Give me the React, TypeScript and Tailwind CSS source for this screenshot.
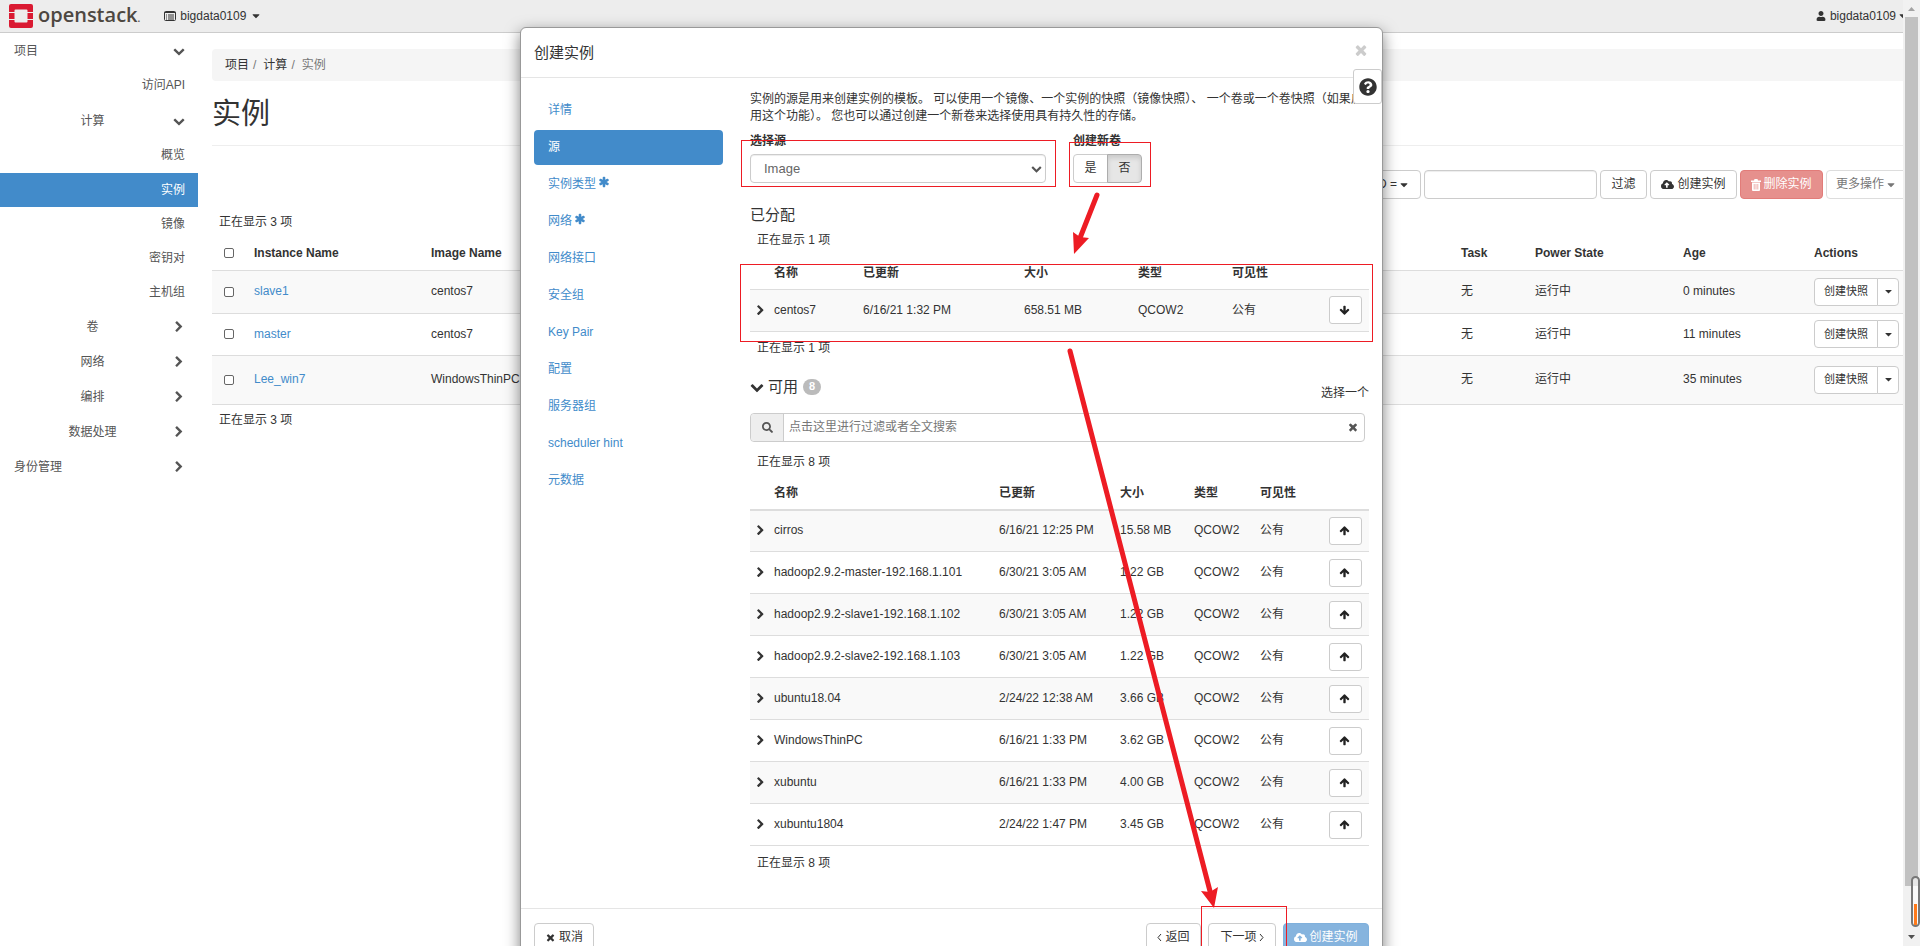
import { useState } from 'react'
import type { ReactNode } from 'react'
import { FaCloudUploadAlt, FaQuestionCircle, FaSearch, FaUser } from 'react-icons/fa'

type NavItem = { label: string; kind: 'root' | 'group' | 'leaf'; open?: boolean; active?: boolean; tall?: boolean }
type Instance = { name: string; image: string; age: string; rowClass: string }
type Image = { name: string; updated: string; size: string }

const glyphs = {
  chevronDown:
    'M1683 808l-742 741q-19 19-45 19t-45-19l-742-741q-19-19-19-45.500t19-45.500l166-165q19-19 45-19t45 19l531 531 531-531q19-19 45-19t45 19l166 165q19 19 19 45.500t-19 45.500z',
  chevronRight:
    'M1363 877l-742 742q-19 19-45 19t-45-19l-166-166q-19-19-19-45t19-45l531-531-531-531q-19-19-19-45t19-45l166-166q19-19 45-19t45 19l742 742q19 19 19 45t-19 45z',
  caret: 'M1408 704q0 26-19 45l-448 448q-19 19-45 19t-45-19l-448-448q-19-19-19-45t19-45 45-19h896q26 0 45 19t19 45z',
  times:
    'M1490 1322q0 40-28 68l-136 136q-28 28-68 28t-68-28l-294-294-294 294q-28 28-68 28t-68-28l-136-136q-28-28-28-68t28-68l294-294-294-294q-28-28-28-68t28-68l136-136q28-28 68-28t68 28l294 294 294-294q28-28 68-28t68 28l136 136q28 28 28 68t-28 68l-294 294 294 294q28 28 28 68z',
  arrowUp:
    'M1675 971q0 51-37 90l-75 75q-38 38-91 38-54 0-90-38l-294-293v704q0 52-37.500 84.500t-90.500 32.500h-128q-53 0-90.500-32.500t-37.500-84.500v-704l-294 293q-36 38-90 38t-90-38l-75-75q-38-38-38-90 0-53 38-91l651-651q35-37 90-37 54 0 91 37l651 651q37 39 37 91z',
  asterisk:
    'M1546 1050q46 26 59.500 77.500t-12.500 97.500l-64 110q-26 46-77.500 59.500t-97.500-12.500l-266-153v307q0 52-38 90t-90 38h-128q-52 0-90-38t-38-90v-307l-266 153q-46 26-97.500 12.500t-77.500-59.500l-64-110q-26-46-12.500-97.500t59.500-77.500l266-154-266-154q-46-26-59.500-77.500t12.500-97.500l64-110q26-46 77.500-59.500t97.500 12.500l266 153v-307q0-52 38-90t90-38h128q52 0 90 38t38 90v307l266-153q46-26 97.500-12.500t77.500 59.500l64 110q26 46 12.500 97.500t-59.500 77.500l-266 154z'
}

const navItems: NavItem[] = [
  { label: '项目', kind: 'root', open: true },
  { label: '访问API', kind: 'leaf', tall: true },
  { label: '计算', kind: 'group', open: true },
  { label: '概览', kind: 'leaf', tall: true },
  { label: '实例', kind: 'leaf', active: true },
  { label: '镜像', kind: 'leaf' },
  { label: '密钥对', kind: 'leaf' },
  { label: '主机组', kind: 'leaf' },
  { label: '卷', kind: 'group' },
  { label: '网络', kind: 'group' },
  { label: '编排', kind: 'group' },
  { label: '数据处理', kind: 'group' },
  { label: '身份管理', kind: 'root' }
]

const instances: Instance[] = [
  { name: 'slave1', image: 'centos7', age: '0 minutes', rowClass: 'h-[43px] bg-[#f9f9f9]' },
  { name: 'master', image: 'centos7', age: '11 minutes', rowClass: 'h-[42px]' },
  { name: 'Lee_win7', image: 'WindowsThinPC', age: '35 minutes', rowClass: 'h-[49px] bg-[#f9f9f9]' }
]

const steps = [
  { label: '详情' },
  { label: '源' },
  { label: '实例类型', required: true },
  { label: '网络', required: true },
  { label: '网络接口' },
  { label: '安全组' },
  { label: 'Key Pair' },
  { label: '配置' },
  { label: '服务器组' },
  { label: 'scheduler hint' },
  { label: '元数据' }
]

const allocated: Image[] = [{ name: 'centos7', updated: '6/16/21 1:32 PM', size: '658.51 MB' }]

const available: Image[] = [
  { name: 'cirros', updated: '6/16/21 12:25 PM', size: '15.58 MB' },
  { name: 'hadoop2.9.2-master-192.168.1.101', updated: '6/30/21 3:05 AM', size: '1.22 GB' },
  { name: 'hadoop2.9.2-slave1-192.168.1.102', updated: '6/30/21 3:05 AM', size: '1.22 GB' },
  { name: 'hadoop2.9.2-slave2-192.168.1.103', updated: '6/30/21 3:05 AM', size: '1.22 GB' },
  { name: 'ubuntu18.04', updated: '2/24/22 12:38 AM', size: '3.66 GB' },
  { name: 'WindowsThinPC', updated: '6/16/21 1:33 PM', size: '3.62 GB' },
  { name: 'xubuntu', updated: '6/16/21 1:33 PM', size: '4.00 GB' },
  { name: 'xubuntu1804', updated: '2/24/22 1:47 PM', size: '3.45 GB' }
]

function Glyph({ name, className }: { name: keyof typeof glyphs; className: string }) {
  return (
    <svg viewBox="0 0 1792 1792" fill="currentColor" className={`shrink-0 ${className}`}>
      <path d={glyphs[name]} />
    </svg>
  )
}

function ListIcon() {
  return (
    <svg width="12" height="12" viewBox="0 0 12 12" fill="none" stroke="currentColor">
      <rect x="0.500" y="1.500" width="11" height="9" rx="1" />
      <path d="M0.500 2.500H11.500M2 5H3M4 5H10M2 7H3M4 7H10M2 9H3M4 9H10" strokeWidth="1" />
    </svg>
  )
}

function TrashIcon() {
  return (
    <svg width="10" height="12" viewBox="0 0 10 12" fill="currentColor">
      <path d="M3.500 0H6.500L7 1.500H10V3H0V1.500H3ZM1 3.500H9V11A1 1 0 0 1 8 12H2A1 1 0 0 1 1 11Z" />
      <path d="M3.200 5V10.500M5 5V10.500M6.800 5V10.500" stroke="#e6908d" strokeWidth="0.700" />
    </svg>
  )
}

function Angle({ d }: { d: string }) {
  return (
    <svg width="5" height="9" viewBox="0 0 5 9" fill="none" stroke="currentColor">
      <path d={d} />
    </svg>
  )
}

function Btn({ className = '', disabled, children }: { className?: string; disabled?: boolean; children: ReactNode }) {
  return (
    <button type="button" disabled={disabled} className={`flex h-[29px] shrink-0 items-center justify-center rounded border whitespace-nowrap ${className}`}>
      {children}
    </button>
  )
}

function Logo() {
  return (
    <a href="#" aria-label="openstack" className="flex items-center gap-[5px] pl-[9px]">
      <svg width="24" height="24" viewBox="0 0 24 24" fill="#da1a32">
        <path d="M2 0H22A2 2 0 0 1 24 2V8H18.500V6.500A1 1 0 0 0 17.500 5.500H6.500A1 1 0 0 0 5.500 6.500V8H0V2A2 2 0 0 1 2 0Z" />
        <path d="M0 9H5.500V15H0ZM18.500 9H24V15H18.500Z" />
        <path d="M0 16H5.500V17.500A1 1 0 0 0 6.500 18.500H17.500A1 1 0 0 0 18.500 17.500V16H24V22A2 2 0 0 1 22 24H2A2 2 0 0 1 0 22Z" />
      </svg>
      <span className="font-['Open_Sans',sans-serif] text-[20px] leading-6 font-semibold text-[#4d4741]">openstack<span className="text-[10px]">.</span></span>
    </a>
  )
}

function Header() {
  return (
    <header className="flex h-[33px] items-center border-b border-[#ccc] bg-[#ededed]">
      <Logo />
      <button type="button" className="ml-6 flex items-center gap-1">
        <ListIcon />
        bigdata0109
        <Glyph name="caret" className="size-3" />
      </button>
      <button type="button" className="-mr-[6px] ml-auto flex shrink-0 items-center gap-1">
        <FaUser className="size-[10px]" />
        <span className="-mr-[3px]">bigdata0109</span>
        <Glyph name="caret" className="size-3" />
      </button>
    </header>
  )
}

function Sidebar() {
  return (
    <nav className="w-[198px] shrink-0 text-[#555]">
      {navItems.map((item) => {
        if (item.kind === 'leaf') {
          return (
            <a
              key={item.label}
              href="#"
              className={`flex items-center justify-end px-[13px] ${item.tall ? 'h-[35px]' : 'h-[34px]'} ${item.active ? 'bg-[#428bca] text-white' : ''}`}
            >
              {item.label}
            </a>
          )
        }
        return (
          <a key={item.label} href="#" className={`flex h-[35px] items-center pt-px pr-[13px] ${item.kind === 'root' ? 'pl-[14px]' : 'pl-3'}`}>
            <span className={`flex-1 ${item.kind === 'group' ? 'text-center' : ''}`}>{item.label}</span>
            <Glyph name={item.open ? 'chevronDown' : 'chevronRight'} className="size-3" />
          </a>
        )
      })}
    </nav>
  )
}

function Toolbar() {
  return (
    <div className="-mr-1 mt-6 flex justify-end gap-[3px]">
      <Btn className="gap-px border-[#ccc] bg-white px-[10px]">
        Instance ID = <Glyph name="caret" className="size-3" />
      </Btn>
      <input aria-label="过滤" className="h-[29px] w-[173px] shrink-0 rounded border border-[#ccc] px-3 shadow-[inset_0_1px_1px_rgba(0,0,0,0.075)]" />
      <Btn className="w-[47px] border-[#ccc] bg-white">过滤</Btn>
      <Btn className="w-[87px] gap-[3px] border-[#ccc] bg-white">
        <FaCloudUploadAlt className="size-[13px]" />创建实例
      </Btn>
      <Btn disabled className="w-[83px] gap-[2px] border-[#e27c79] bg-[#e6908d] text-white">
        <TrashIcon />删除实例
      </Btn>
      <Btn disabled className="w-[81px] gap-px border-[#ddd] bg-white text-[#777]">
        更多操作 <Glyph name="caret" className="size-3" />
      </Btn>
    </div>
  )
}

function Check({ label }: { label: string }) {
  return <input type="checkbox" aria-label={label} className="mx-3 block size-[10px] appearance-none rounded-[2px] border border-[#666] bg-white" />
}

function InstancesTable() {
  return (
    <table className="mt-[6px] w-full table-fixed text-left">
      <colgroup>
        <col className="w-[42px]" />
        <col className="w-[177px]" />
        <col />
        <col className="w-[74px]" />
        <col className="w-[148px]" />
        <col className="w-[131px]" />
        <col className="w-[89px]" />
      </colgroup>
      <thead>
        <tr className="h-[33px] border-b border-[#ddd]">
          <th><Check label="全选" /></th>
          <th>Instance Name</th>
          <th>Image Name</th>
          <th>Task</th>
          <th>Power State</th>
          <th>Age</th>
          <th>Actions</th>
        </tr>
      </thead>
      <tbody>
        {instances.map((row) => (
          <tr key={row.name} className={`border-b border-[#ddd] ${row.rowClass}`}>
            <td><Check label={row.name} /></td>
            <td><a href="#" className="text-[#428bca]">{row.name}</a></td>
            <td>{row.image}</td>
            <td>无</td>
            <td>运行中</td>
            <td>{row.age}</td>
            <td>
              <div className="flex h-7">
                <button type="button" className="w-16 rounded-l border border-[#ccc] bg-white text-[11px]">创建快照</button>
                <button type="button" aria-label="更多" className="-ml-px flex w-[22px] items-center justify-center rounded-r border border-[#ccc] bg-white">
                  <Glyph name="caret" className="size-[11px]" />
                </button>
              </div>
            </td>
          </tr>
        ))}
      </tbody>
    </table>
  )
}

function ImageTable({ rows, direction }: { rows: Image[]; direction: 'up' | 'down' }) {
  const up = direction === 'up'
  return (
    <table className={`w-full table-fixed text-left ${up ? 'mt-[6px]' : 'mt-[7px]'}`}>
      <colgroup>
        <col className="w-6" />
        <col className={up ? 'w-[225px]' : 'w-[89px]'} />
        <col className={up ? 'w-[121px]' : 'w-[161px]'} />
        <col className={up ? 'w-[74px]' : 'w-[114px]'} />
        <col className={up ? 'w-[66px]' : 'w-[94px]'} />
        <col />
        <col className="w-10" />
      </colgroup>
      <thead>
        <tr className={`h-[33px] border-[#ddd] *:pt-[2px] ${up ? 'border-b-2' : 'border-b'}`}>
          <th></th>
          <th>名称</th>
          <th>已更新</th>
          <th>大小</th>
          <th>类型</th>
          <th>可见性</th>
          <th></th>
        </tr>
      </thead>
      <tbody>
        {rows.map((row, i) => (
          <tr key={row.name} className={`h-[42px] border-b border-[#ddd] ${i % 2 === 0 ? 'bg-[#f9f9f9]' : ''}`}>
            <td className="pl-[5px]"><Glyph name="chevronRight" className="size-[11px]" /></td>
            <td>{row.name}</td>
            <td>{row.updated}</td>
            <td>{row.size}</td>
            <td>QCOW2</td>
            <td>公有</td>
            <td>
              <button type="button" aria-label={up ? '分配' : '移除'} className="flex h-7 w-[33px] items-center justify-center rounded-[3px] border border-[#ccc] bg-white pr-[2px] text-[#222]">
                <Glyph name="arrowUp" className={up ? 'size-[11px]' : 'size-[11px] rotate-180'} />
              </button>
            </td>
          </tr>
        ))}
      </tbody>
    </table>
  )
}

// Red boxes and arrows laid over the dialog
function Annotations() {
  return (
    <svg className="pointer-events-none absolute top-0 left-0 h-full w-full overflow-visible" fill="none" stroke="#ed1c24">
      <rect x="220.500" y="112.500" width="314" height="46" />
      <rect x="548.500" y="114.500" width="81" height="44" />
      <rect x="219.500" y="236.500" width="632" height="77" />
      <rect x="680.500" y="878.500" width="85" height="60" />
      <path d="M576 167L559 210" strokeWidth="5" strokeLinecap="round" />
      <path d="M552 204L553 226L568 210L559 209Z" fill="#ed1c24" stroke="none" />
      <path d="M549 323L690 867" strokeWidth="5" strokeLinecap="round" />
      <path d="M680 863L693 880L697 859L689 864Z" fill="#ed1c24" stroke="none" />
    </svg>
  )
}

function LaunchDialog() {
  const [step, setStep] = useState('源')
  const [source, setSource] = useState('Image')

  return (
    <div role="dialog" aria-label="创建实例" className="relative mx-auto mt-[27px] w-full max-w-[863px] rounded-md border border-[#999] bg-white shadow-[0_5px_15px_rgba(0,0,0,0.5)]">
      <div className="flex h-[50px] items-center justify-between border-b border-[#e5e5e5] px-[13px]">
        <h4 className="text-[15px]">创建实例</h4>
        <button type="button" aria-label="关闭" className="pb-[6px] text-[#ccc]"><Glyph name="times" className="size-4" /></button>
      </div>
      <button type="button" aria-label="帮助" className="absolute top-[41px] right-0 flex h-[35px] w-[29px] items-center justify-center rounded-[3px] border border-[#ccc] bg-white">
        <FaQuestionCircle className="size-[18px]" />
      </button>

      <div className="flex gap-[27px] px-[13px] pb-9">
        <ul className="flex w-[189px] shrink-0 flex-col gap-[2px] pt-[15px]">
          {steps.map((item) => (
            <li key={item.label}>
              <a
                href="#"
                onClick={() => setStep(item.label)}
                className={`flex h-[35px] items-center gap-[2px] rounded px-[14px] ${item.label === step ? 'bg-[#428bca] text-white' : 'text-[#428bca]'}`}
              >
                {item.label}
                {item.required ? <Glyph name="asterisk" className="mb-[6px] size-3" /> : null}
              </a>
            </li>
          ))}
        </ul>

        <section className="min-w-0 flex-1 pt-[13px]">
          <p>
            实例的源是用来创建实例的模板。 可以使用一个镜像、一个实例的快照（镜像快照）、 一个卷或一个卷快照（如果启用这个功能）。 您也可以通过创建一个新卷来选择使用具有持久性的存储。
          </p>
          <div className="mt-2 flex gap-[27px]">
            <div className="w-[296px]">
              <label htmlFor="boot-source" className="mb-1 block font-bold">选择源</label>
              <div className="relative">
                <select
                  id="boot-source"
                  value={source}
                  onChange={(event) => setSource(event.target.value)}
                  className="h-[29px] w-full appearance-none rounded border border-[#ccc] bg-white px-[13px] text-[13px] text-[#666] shadow-[inset_0_1px_1px_rgba(0,0,0,0.075)]"
                >
                  <option>Image</option>
                </select>
                <Glyph name="chevronDown" className="pointer-events-none absolute top-[9px] right-1 size-[11px] text-[#555]" />
              </div>
            </div>
            <div>
              <div className="mb-1 font-bold">创建新卷</div>
              <div className="flex">
                <button type="button" className="h-[29px] w-[35px] rounded-l border border-[#ccc] bg-white">是</button>
                <button type="button" className="-ml-px h-[29px] w-[35px] rounded-r border border-[#adadad] bg-[#e6e6e6] shadow-[inset_0_3px_5px_rgba(0,0,0,0.125)]">否</button>
              </div>
            </div>
          </div>

          <h4 className="mt-[23px] text-[15px] leading-[17px]">已分配</h4>
          <p className="mt-[9px] pl-[7px]">正在显示 1 项</p>
          <ImageTable rows={allocated} direction="down" />
          <p className="mt-2 pl-[7px]">正在显示 1 项</p>

          <div className="mt-5 flex items-end justify-between">
            <button type="button" className="mb-[5px] flex items-center gap-1">
              <Glyph name="chevronDown" className="size-[14px]" />
              <span className="text-[15px] leading-5">可用</span>
              <span className="ml-px flex h-4 items-center rounded-full bg-[#bbb] px-[6px] text-[11px] font-bold text-white">8</span>
            </button>
            <span>选择一个</span>
          </div>
          <div className="mt-[11px] mr-1 flex h-[29px] items-center rounded border border-[#ccc]">
            <span className="flex h-full w-[33px] items-center justify-center rounded-l border-r border-[#ccc] bg-[#eee] text-[#555]">
              <FaSearch className="size-[11px]" />
            </span>
            <input aria-label="搜索" placeholder="点击这里进行过滤或者全文搜索" className="h-full flex-1 px-[5px] outline-none placeholder:text-[#777]" />
            <button type="button" aria-label="清除" className="pr-[5px] text-[#555]"><Glyph name="times" className="size-3" /></button>
          </div>
          <p className="mt-3 pl-[7px]">正在显示 8 项</p>
          <ImageTable rows={available} direction="up" />
          <p className="mt-[9px] pl-[7px]">正在显示 8 项</p>
        </section>
      </div>

      <div className="flex border-t border-[#e5e5e5] px-[13px] py-[14px]">
        <Btn className="w-[60px] gap-[3px] border-[#ccc]"><Glyph name="times" className="size-[11px]" />取消</Btn>
        <div className="ml-auto flex gap-[7px]">
          <Btn className="w-[55px] gap-[3px] border-[#ccc]"><Angle d="M4 1L1 4.500L4 8" />返回</Btn>
          <Btn className="w-[68px] gap-[2px] border-[#ccc]">下一项<Angle d="M1 1L4 4.500L1 8" /></Btn>
          <Btn disabled className="w-[86px] gap-[2px] border-[#7fb0dc] bg-[#86b4de] text-white">
            <FaCloudUploadAlt className="size-[13px]" />创建实例
          </Btn>
        </div>
      </div>
      <Annotations />
    </div>
  )
}

function Scrollbar() {
  return (
    <div className="relative flex w-[17px] shrink-0 flex-col items-center bg-[#f1f1f1]">
      <svg width="17" height="17" fill="#a3a3a3"><path d="M5 11L8.500 7L12 11Z" /></svg>
      <div className="mb-[43px] w-[13px] flex-1 bg-[#c1c1c1]" />
      <svg width="17" height="17" fill="#505050"><path d="M5 6L8.500 10L12 6Z" /></svg>
      <div className="absolute right-0 bottom-[19px] flex h-[51px] w-[9px] items-end justify-center rounded-full border-2 border-[#777] bg-white/60">
        <div className="h-[21px] w-[3px] bg-[#ff7a1a]" />
      </div>
    </div>
  )
}

export default function App() {
  return (
    <div className="flex h-screen overflow-hidden bg-white font-['Liberation_Sans','Noto_Sans_CJK_SC',sans-serif] text-[12px] leading-[17px] text-[#333]">
      <div className="relative min-w-0 flex-1 overflow-hidden">
        <Header />
        <div className="flex">
          <Sidebar />
          <main className="min-w-0 flex-1 pl-[14px]">
            <ol className="mt-4 flex h-8 items-center gap-1 rounded-l bg-[#f5f5f5] px-[13px]">
              <li><a href="#">项目</a></li>
              <li className="pr-[3px] text-[#777]">/</li>
              <li><a href="#">计算</a></li>
              <li className="pr-[3px] text-[#777]">/</li>
              <li className="text-[#777]">实例</li>
            </ol>
            <h1 className="mt-4 border-b border-[#eee] pb-[13px] text-[29px] leading-[35px]">实例</h1>
            <Toolbar />
            <p className="mt-[15px] pl-[7px]">正在显示 3 项</p>
            <InstancesTable />
            <p className="mt-[7px] pl-[7px]">正在显示 3 项</p>
          </main>
        </div>
        <div className="absolute inset-0 overflow-hidden">
          <LaunchDialog />
        </div>
      </div>
      <Scrollbar />
    </div>
  )
}
